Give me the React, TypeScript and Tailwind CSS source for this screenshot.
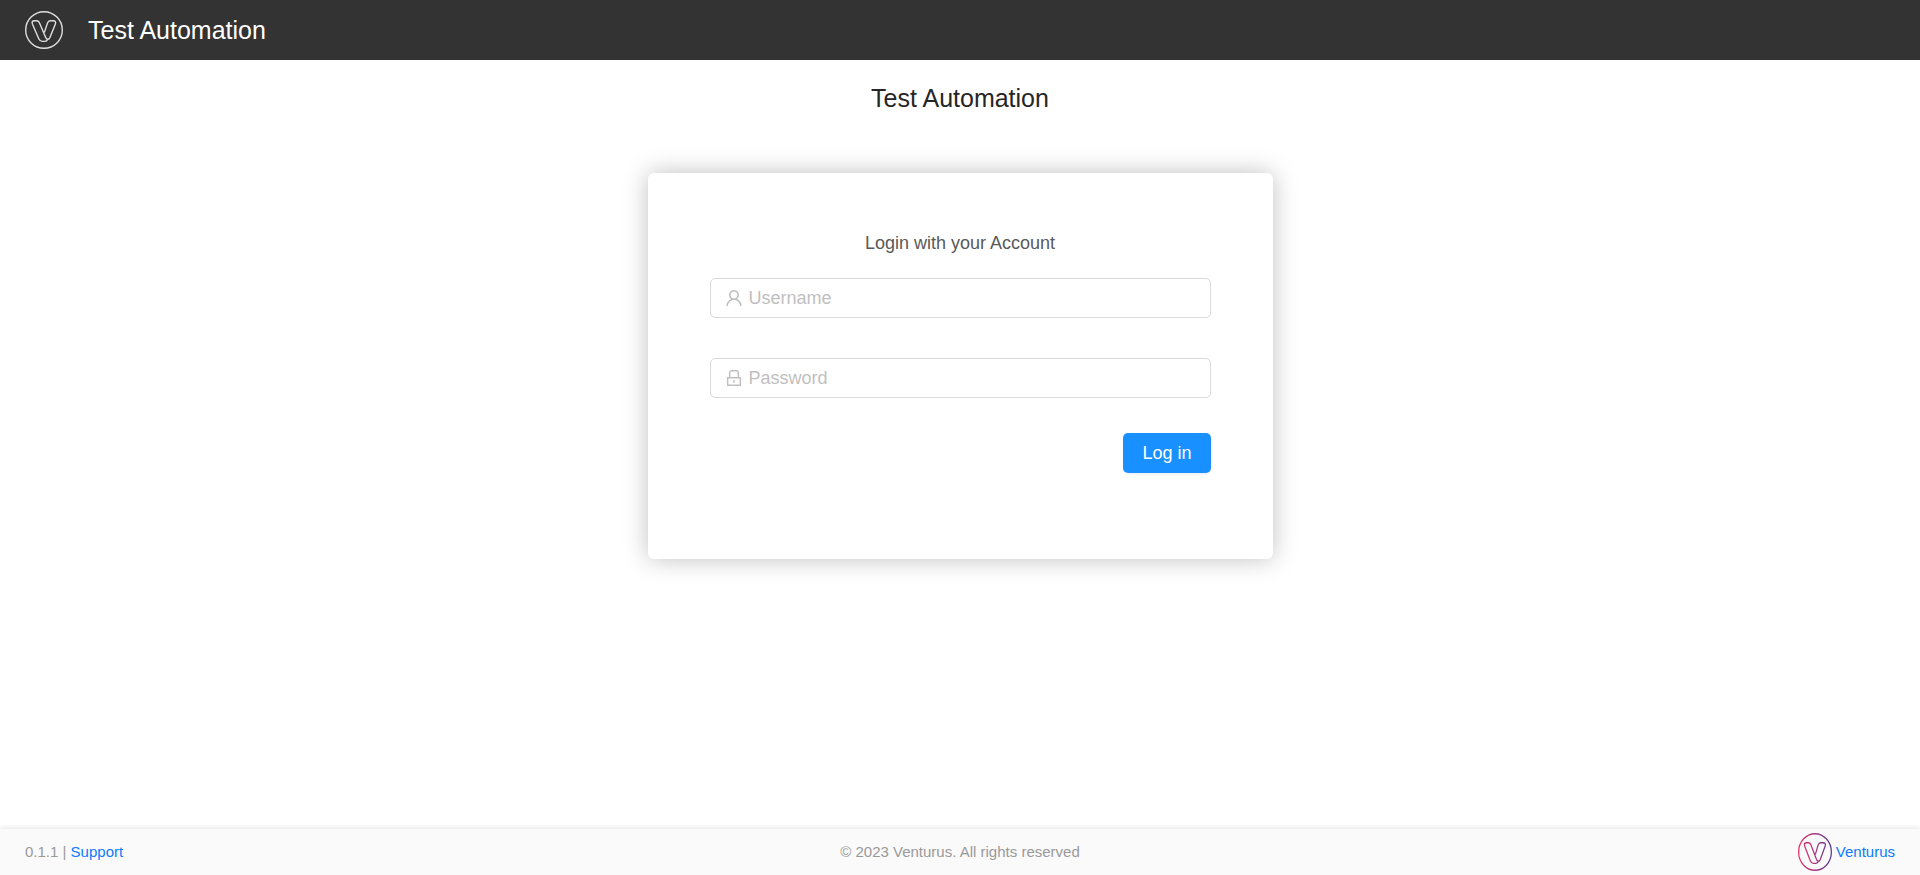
import { useId, type ReactNode } from "react";
import { AiOutlineLock, AiOutlineUser } from "react-icons/ai";

function LogoStrokes() {
  return (
    <>
      <ellipse cx="19" cy="19" rx="18.3" ry="18.3" />
      <path d="M19.4 21.4 L22.5 12 Q23.3 9.8 25.4 9.8 H28 Q31.6 9.8 30.3 13.2 L24.8 26.8 Q24 28.6 22.4 28.1 Q21.2 27.7 20.6 26.3 L14.4 11.8 Q13.5 9.8 11.6 9.8 H9.4 Q6.2 9.8 7.5 13.2 L13.9 28 Q15 30.4 17.4 30.4 H19.6 Q21.8 30.4 22.7 28.4" />
    </>
  );
}

function HeaderLogo() {
  return (
    <svg viewBox="0 0 38 38" className="size-[38px] shrink-0" fill="none" stroke="#dedede" strokeWidth="1.4" aria-hidden="true">
      <LogoStrokes />
    </svg>
  );
}

function FooterLogo() {
  const id = useId();
  return (
    <svg
      viewBox="0 0 38 38"
      preserveAspectRatio="none"
      className="h-[38px] w-[34px] shrink-0"
      fill="none"
      stroke={`url(#${id})`}
      strokeWidth="1.4"
      aria-hidden="true"
    >
      <defs>
        <linearGradient id={id} gradientUnits="userSpaceOnUse" x1="0" y1="19" x2="38" y2="19">
          <stop offset="0" stopColor="#ec2f68" />
          <stop offset="0.5" stopColor="#a9377f" />
          <stop offset="1" stopColor="#523a95" />
        </linearGradient>
      </defs>
      <LogoStrokes />
    </svg>
  );
}

function Field({ label, type, name, icon }: { label: string; type: string; name: string; icon: ReactNode }) {
  return (
    <label className="flex h-10 items-center gap-1.5 rounded-[5px] border border-[#d9d9d9] bg-white px-3.5 text-[#bfbfbf] focus-within:border-[#1890ff]">
      {icon}
      <input
        type={type}
        name={name}
        placeholder={label}
        aria-label={label}
        className="min-w-0 flex-1 bg-transparent text-lg leading-6 text-[#595959] outline-none placeholder:text-[#bfbfbf]"
      />
    </label>
  );
}

export default function App() {
  return (
    <div className="flex min-h-screen flex-col bg-white font-['Liberation_Sans',Arial,sans-serif]">
      <header className="flex h-[60px] items-center gap-[25px] bg-[#333333] px-[25px] text-white">
        <HeaderLogo />
        <span className="text-[25px] leading-8">Test Automation</span>
      </header>

      <main className="flex flex-1 flex-col items-center px-6 pt-[22px] pb-10">
        <h1 className="text-[25px] leading-8 text-[#262626]">Test Automation</h1>
        <form
          className="mt-[59px] flex w-full max-w-[625px] flex-col rounded-md bg-white px-[62px] pt-14 pb-[86px] shadow-[0_0_25px_rgba(0,0,0,0.25)]"
          onSubmit={(event) => event.preventDefault()}
        >
          <h2 className="text-center text-lg leading-7 text-[#595959]">Login with your Account</h2>
          <div className="mt-[21px] flex flex-col gap-10">
            <Field
              label="Username"
              type="text"
              name="username"
              icon={<AiOutlineUser viewBox="64 64 896 896" className="size-[18px] shrink-0" />}
            />
            <Field
              label="Password"
              type="password"
              name="password"
              icon={<AiOutlineLock viewBox="64 64 896 896" className="size-[18px] shrink-0" />}
            />
          </div>
          <button
            type="submit"
            className="mt-[35px] h-10 self-end rounded-[5px] bg-[#1890ff] px-[19px] text-lg leading-6 text-white shadow-[0_2px_0_rgba(0,0,0,0.04)]"
          >
            Log in
          </button>
        </form>
      </main>

      <footer className="grid h-[46px] grid-cols-[1fr_auto_1fr] items-center bg-[#fafafa] px-[25px] text-[15px] leading-6 text-[#999999] shadow-[0_0_6px_rgba(0,0,0,0.15)]">
        <div>
          0.1.1 |{" "}
          <a href="#support" className="text-[#0d7bff]">
            Support
          </a>
        </div>
        <p>© 2023 Venturus. All rights reserved</p>
        <a href="#venturus" className="flex items-center gap-1 justify-self-end text-[#0d7bff]">
          <FooterLogo />
          Venturus
        </a>
      </footer>
    </div>
  );
}
